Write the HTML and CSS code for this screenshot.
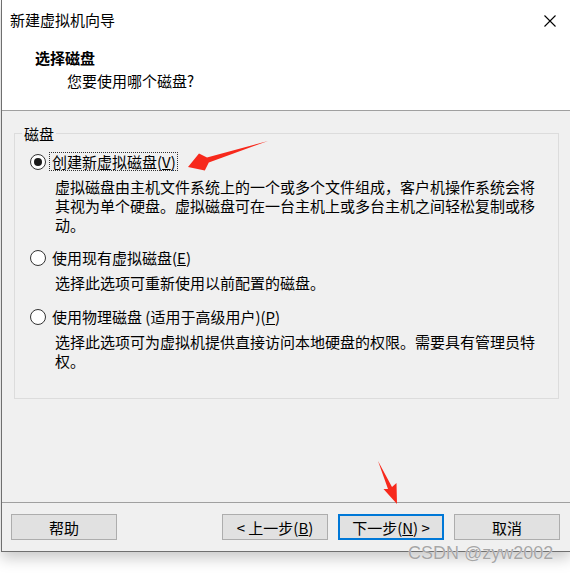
FILE: index.html
```html
<!DOCTYPE html>
<html lang="zh-CN">
<head>
    <meta charset="UTF-8">
    <meta name="viewport" content="width=device-width, initial-scale=1.0">
    <title>新建虚拟机向导</title>
    <link rel="stylesheet" href="styles.css">
</head>
<body>
    <div class="window">
        <div class="top">
            <div class="titlebar">
                <span class="title">新建虚拟机向导</span>
                <svg class="close" width="12" height="12" viewBox="0 0 12 12">
                    <path d="M0.5 0.5 L11.5 11.5 M11.5 0.5 L0.5 11.5" stroke="#000" stroke-width="1.1" fill="none"/>
                </svg>
            </div>
            <div class="header">
                <h2>选择磁盘</h2>
                <p>您要使用哪个磁盘?</p>
            </div>
        </div>

        <div class="content">
            <fieldset class="group">
                <legend>磁盘</legend>

                <div class="option">
                    <div class="choice">
                        <span class="radio checked"></span>
                        <span class="label focus">创建新虚拟磁盘(<u>V</u>)</span>
                    </div>
                    <p class="desc">虚拟磁盘由主机文件系统上的一个或多个文件组成，客户机操作系统会将其视为单个硬盘。虚拟磁盘可在一台主机上或多台主机之间轻松复制或移动。</p>
                </div>

                <div class="option">
                    <div class="choice">
                        <span class="radio"></span>
                        <span class="label">使用现有虚拟磁盘(<u>E</u>)</span>
                    </div>
                    <p class="desc">选择此选项可重新使用以前配置的磁盘。</p>
                </div>

                <div class="option">
                    <div class="choice">
                        <span class="radio"></span>
                        <span class="label">使用物理磁盘 (适用于高级用户)(<u>P</u>)</span>
                    </div>
                    <p class="desc">选择此选项可为虚拟机提供直接访问本地硬盘的权限。需要具有管理员特权。</p>
                </div>
            </fieldset>
        </div>

        <div class="footer">
            <button>帮助</button>
            <div class="nav">
                <button>&lt; 上一步(<u>B</u>)</button>
                <button class="default">下一步(<u>N</u>) &gt;</button>
                <button>取消</button>
            </div>
        </div>
    </div>

    <!-- 标注箭头 -->
    <svg class="marks" width="570" height="576" viewBox="0 0 570 576">
        <polygon points="268,141 207,157.6 199,153.5 188,167 204.8,170.5 208.8,162.4" fill="#f7291c"/>
        <polygon points="378,461 392,487 396.5,483 397,504 383.5,489 388,489" fill="#f7291c"/>
    </svg>

    <div class="watermark">CSDN @zyw2002</div>
</body>
</html>
```

FILE: styles.css
```css
* {
    box-sizing: border-box;
    margin: 0;
    padding: 0;
}

body {
    font-family: "Noto Sans CJK SC", "Liberation Sans", sans-serif;
    font-size: 15px;
    line-height: 19px;
    color: #000;
    background-color: #fff;
    overflow: hidden;
    width: 570px;
    height: 576px;
}

.window {
    width: 570px;
    margin-left: 1px;
    border-left: 1px solid #6f6f6f;
    border-bottom: 1px solid #6f6f6f;
    background-color: #f0f0f0;
    box-shadow: 0 6px 14px rgba(0, 0, 0, 0.22);
}

.top {
    height: 111px;
    background-color: #fff;
    border-bottom: 1px solid #a0a0a0;
}

.titlebar {
    height: 40px;
    display: flex;
    align-items: center;
    justify-content: space-between;
    padding: 0 15px 0 8px;
}

.title {
    line-height: 40px;
}

.close {
    display: block;
    margin-top: 1px;
}

.header h2 {
    font-size: 15px;
    font-weight: 700;
    margin-top: 8px;
    padding-left: 33px;
}

.header p {
    margin-top: 4px;
    padding-left: 65px;
}

.content {
    height: 392px;
    padding-top: 13px;
    border-bottom: 1px solid #a0a0a0;
}

.group {
    margin: 0 12px;
    padding: 0 0 28px 0;
    border: 1px solid #dcdcdc;
}

.group legend {
    margin-left: 7px;
    padding: 0 2px;
}

.option {
    margin-top: 15px;
    padding-left: 15px;
}

.option:first-of-type {
    margin-top: 9px;
}

.option:nth-of-type(2) {
    margin-top: 14px;
}

.choice {
    display: flex;
    align-items: center;
    height: 19px;
}

.radio {
    width: 16px;
    height: 16px;
    border: 1px solid #333;
    border-radius: 50%;
    background-color: #fff;
    display: flex;
    align-items: center;
    justify-content: center;
}

.radio.checked::after {
    content: "";
    width: 8px;
    height: 8px;
    border-radius: 50%;
    background-color: #1a1a1a;
}

.label {
    margin-left: 3px;
    padding: 0 1px 0 2px;
    border: 1px dotted transparent;
    line-height: 17px;
}

.label.focus {
    border-color: #333;
}

.desc {
    margin-top: 6px;
    margin-left: 25px;
    width: 481px;
}

.footer {
    height: 48px;
    display: flex;
    justify-content: space-between;
    padding: 11px 11px 0 9px;
}

button {
    width: 106px;
    height: 26px;
    font-family: inherit;
    font-size: 15px;
    color: #000;
    background-color: #e1e1e1;
    border: 1px solid #adadad;
}

button.default {
    border: 2px solid #0078d7;
}

.nav {
    display: flex;
    gap: 10px;
}

.marks {
    position: absolute;
    left: 0;
    top: 0;
    pointer-events: none;
}

.watermark {
    position: absolute;
    left: 408px;
    top: 544px;
    font-family: "Liberation Sans", sans-serif;
    font-size: 18px;
    color: #a6a6a6;
    text-shadow: 0 0 1px #fff;
}
```
